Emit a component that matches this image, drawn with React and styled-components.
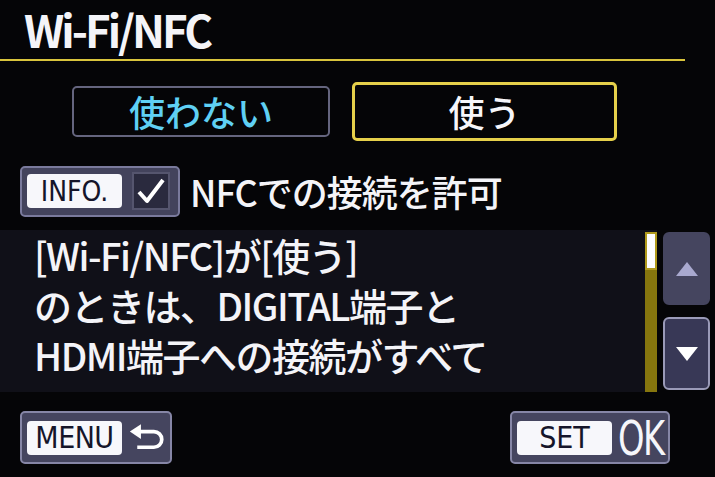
import React from 'react'
import styled, { createGlobalStyle } from 'styled-components'

const Global = createGlobalStyle`
  html, body {
    margin: 0;
    padding: 0;
    background: #050507;
  }
  body {
    font-family: "Noto Sans CJK JP", "Noto Sans", sans-serif;
  }
`

const Screen = styled.div`
  width: 715px;
  height: 477px;
  overflow: hidden;
  background: #050507;
  color: #f4f4f8;
  display: flex;
  flex-direction: column;
`

const Header = styled.div`
  width: 685px;
  height: 61px;
  border-bottom: 2px solid #d9c43c;
  display: flex;
  align-items: flex-end;
  padding-left: 24px;
  box-sizing: border-box;
`

const Title = styled.h1`
  flex: 1;
  margin: 0 0 2px;
  padding: 0 8px 0 0;
  font-size: 44px;
  font-weight: 700;
  letter-spacing: -3px;
  line-height: 56px;
  white-space: nowrap;
`

const Options = styled.div`
  display: flex;
  gap: 22px;
  padding-left: 72px;
  height: 100px;
  align-items: center;
`

const Option = styled.div`
  box-sizing: border-box;
  width: ${p => (p.$active ? '265px' : '258px')};
  height: ${p => (p.$active ? '59px' : '51px')};
  border: ${p => (p.$active ? '3px solid #e6d04a' : '2px solid #65657e')};
  border-radius: 5px;
  display: flex;
  align-items: center;
  justify-content: center;
  color: ${p => (p.$active ? '#f6f6fa' : '#5fd0f4')};
  font-size: 36px;
  font-weight: 500;
`

const InfoRow = styled.div`
  display: flex;
  align-items: center;
  gap: 10px;
  padding-left: 20px;
  height: 52px;
  margin-top: 4px;
`

const InfoKey = styled.div`
  box-sizing: border-box;
  width: 160px;
  height: 51px;
  background: #43435c;
  border: 2px solid #7a7a9c;
  border-radius: 5px;
  display: flex;
  align-items: center;
  padding: 0 8px 0 5px;
  gap: 10px;
`

const KeyLabel = styled.div`
  flex-shrink: 0;
  background: #f7f7fb;
  color: #15152a;
  border-radius: 4px;
  height: 34px;
  width: ${p => p.$w || 95}px;
  display: flex;
  align-items: center;
  justify-content: center;
  font-family: "DejaVu Sans Condensed", "DejaVu Sans", sans-serif;
  font-stretch: condensed;
  font-size: ${p => p.$size || 28}px;
  letter-spacing: ${p => p.$spacing ?? 0}px;
`

const CheckBox = styled.div`
  box-sizing: border-box;
  width: 38px;
  height: 38px;
  background: #2a2a3e;
  border: 2px solid #55556e;
  display: flex;
  align-items: center;
  justify-content: center;
`

const InfoText = styled.div`
  font-size: 36px;
  font-weight: 500;
  letter-spacing: -1px;
`

const Message = styled.div`
  margin-top: 13px;
  height: 162px;
  display: flex;
  background: #101018;
`

const MessageText = styled.div`
  flex: 1;
  padding: 0 0 0 34px;
  font-size: 38px;
  font-weight: 500;
  line-height: 50px;
  letter-spacing: -1.5px;
  white-space: nowrap;
`

const Track = styled.div`
  width: 12px;
  margin: 2px 0 0;
  background: #86760e;
  position: relative;
`

const Thumb = styled.div`
  position: absolute;
  top: 0;
  left: 0;
  right: 0;
  height: 38px;
  box-sizing: border-box;
  background: #fdfdff;
  border: 2px solid #b09a1c;
`

const ScrollButtons = styled.div`
  width: 58px;
  display: flex;
  flex-direction: column;
  gap: 12px;
  padding: 2px 5px 2px 6px;
  box-sizing: border-box;
  background: #050507;
`

const ScrollButton = styled.div`
  flex: 1;
  border-radius: 6px;
  background: ${p => (p.$down ? '#383856' : '#45455f')};
  border: 2px solid ${p => (p.$down ? '#9a9ab8' : '#45455f')};
  display: flex;
  align-items: center;
  justify-content: center;
`

const Footer = styled.div`
  display: flex;
  justify-content: space-between;
  padding: 19px 45px 0 20px;
`

const FooterKey = styled.div`
  box-sizing: border-box;
  height: 53px;
  width: ${p => p.$w}px;
  background: #45455f;
  border: 2px solid #8686a6;
  border-radius: 5px;
  display: flex;
  align-items: center;
  padding: 0 5px;
  gap: 6px;
  overflow: hidden;
`

const OkText = styled.span`
  font-family: "DejaVu Sans Condensed", "DejaVu Sans", sans-serif;
  font-stretch: condensed;
  font-size: 48px;
  line-height: 1;
  color: #f6f6fa;
  letter-spacing: -2px;
  transform: scaleX(0.78);
  transform-origin: left center;
`

function Triangle({ down }) {
  return (
    <svg width="22" height="14" viewBox="0 0 22 14">
      {down
        ? <polygon points="0,0 22,0 11,14" fill="#ffffff" />
        : <polygon points="0,14 22,14 11,0" fill="#a9a9cf" />}
    </svg>
  )
}

function ReturnIcon() {
  return (
    <svg width="40" height="32" viewBox="0 0 40 32">
      <path d="M12 9 H28 a8.5 8.5 0 0 1 0 17 H10" fill="none" stroke="#fff" strokeWidth="4" />
      <polygon points="2,9 14,1 14,17" fill="#fff" />
    </svg>
  )
}

export default function App() {
  return (
    <>
      <Global />
      <Screen>
        <Header>
          <Title>Wi-Fi/NFC</Title>
        </Header>
        <Options>
          <Option>使わない</Option>
          <Option $active>使う</Option>
        </Options>
        <InfoRow>
          <InfoKey>
            <KeyLabel $size={28}>INFO.</KeyLabel>
            <CheckBox>
              <svg width="30" height="28" viewBox="0 0 30 28">
                <path d="M3 15 L11 24 L27 3" fill="none" stroke="#fff" strokeWidth="4" strokeLinejoin="round" />
              </svg>
            </CheckBox>
          </InfoKey>
          <InfoText>NFCでの接続を許可</InfoText>
        </InfoRow>
        <Message>
          <MessageText>
            [Wi-Fi/NFC]が[使う]<br />
            のときは、DIGITAL端子と<br />
            HDMI端子への接続がすべて
          </MessageText>
          <Track>
            <Thumb />
          </Track>
          <ScrollButtons>
            <ScrollButton><Triangle /></ScrollButton>
            <ScrollButton $down><Triangle down /></ScrollButton>
          </ScrollButtons>
        </Message>
        <Footer>
          <FooterKey $w={152}>
            <KeyLabel $w={95} $size={30} $spacing={-0.5}>MENU</KeyLabel>
            <ReturnIcon />
          </FooterKey>
          <FooterKey $w={160}>
            <KeyLabel $w={95} $size={30}>SET</KeyLabel>
            <OkText>OK</OkText>
          </FooterKey>
        </Footer>
      </Screen>
    </>
  )
}
